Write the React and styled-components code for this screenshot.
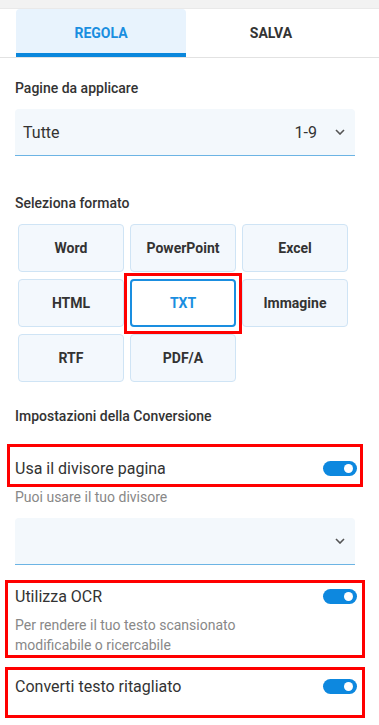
import React from 'react'
import styled, { createGlobalStyle } from 'styled-components'

const GlobalStyle = createGlobalStyle`
  body {
    margin: 0;
    background: #fff;
    font-family: Roboto, 'Noto Sans', sans-serif;
    color: #333;
  }
`

const Page = styled.div`
  width: 379px;
  height: 725px;
  overflow: hidden;
  background: #fff;
`

const TopStrip = styled.div`
  height: 9px;
  background: #f2f2f2;
  border-bottom: 1px solid #e9e9e9;
  box-sizing: border-box;
`

const Tabs = styled.div`
  display: flex;
  padding: 0 16px;
  border-bottom: 1px solid #e2e2e2;
`

const Tab = styled.div`
  width: 170px;
  height: 48px;
  box-sizing: border-box;
  display: flex;
  align-items: center;
  justify-content: center;
  font-size: 14px;
  font-weight: 700;
  padding-top: ${p => (p.active ? '4px' : '0')};
  color: ${p => (p.active ? '#1a8ee0' : '#333')};
  background: ${p => (p.active ? '#e8f3fd' : 'transparent')};
  border-bottom: ${p => (p.active ? '4px solid #0a87dc' : 'none')};
  border-radius: 4px 4px 0 0;
`

const Content = styled.div`
  padding: 0 24px 0 15px;
  display: flex;
  flex-direction: column;
`

const Label = styled.div`
  font-size: 14px;
  line-height: 20px;
  font-weight: 500;
  color: #333;
  margin-top: ${p => p.top}px;
`

const Select = styled.div`
  margin-top: ${p => p.top}px;
  height: 47px;
  box-sizing: border-box;
  background: #f3f8fc;
  border-radius: 4px 4px 0 0;
  border-bottom: 1px solid #6cb4e4;
  display: flex;
  align-items: center;
  padding: 0 10px 0 8px;
  font-size: 16px;
  color: #333;
`

const SelectValue = styled.span`
  flex: 1;
`

const SelectRange = styled.span`
  margin-right: 18px;
`

const Grid = styled.div`
  margin: 11px 0 0 3px;
  display: grid;
  grid-template-columns: repeat(3, 106px);
  grid-auto-rows: 48px;
  column-gap: 6px;
  row-gap: 7px;
`

const Format = styled.div`
  position: relative;
  box-sizing: border-box;
  display: flex;
  align-items: center;
  justify-content: center;
  font-size: 14px;
  font-weight: 700;
  border-radius: 4px;
  background: ${p => (p.active ? '#fff' : '#f3f8fd')};
  border: ${p => (p.active ? '2px solid #1a8ee0' : '1px solid #cfe4f5')};
  color: ${p => (p.active ? '#1a8ee0' : '#333')};

  &::before {
    content: '';
    display: ${p => (p.active ? 'block' : 'none')};
    position: absolute;
    inset: -8px -8px -9px -8px;
    border: 3px solid #f00;
  }
`

const OptionBox = styled.div`
  margin: ${p => p.top}px ${p => p.side}px 0;
  height: ${p => p.h}px;
  box-sizing: border-box;
  border: 3px solid #f00;
  padding: ${p => p.pad};
  display: flex;
  flex-direction: column;
`

const OptionRow = styled.div`
  display: flex;
  align-items: center;
  justify-content: space-between;
  height: 24px;
  font-size: 16px;
  color: #333;
`

const Hint = styled.div`
  font-size: 14px;
  line-height: 20px;
  color: #888;
  margin-top: ${p => p.top || 0}px;
`

const Toggle = styled.div`
  width: 34px;
  height: 15px;
  border-radius: 8px;
  background: #0d88df;
  position: relative;
  flex-shrink: 0;

  &::after {
    content: '';
    position: absolute;
    right: 4px;
    top: 3px;
    width: 9px;
    height: 9px;
    border-radius: 50%;
    background: #fff;
  }
`

const Chevron = () => (
  <svg width="10" height="6" viewBox="0 0 10 6">
    <path d="M1 1 L5 5 L9 1" fill="none" stroke="#555" strokeWidth="1.6" />
  </svg>
)

const formats = ['Word', 'PowerPoint', 'Excel', 'HTML', 'TXT', 'Immagine', 'RTF', 'PDF/A']

export default function App() {
  return (
    <Page>
      <GlobalStyle />
      <TopStrip />
      <Tabs>
        <Tab active>REGOLA</Tab>
        <Tab>SALVA</Tab>
      </Tabs>
      <Content>
        <Label top={20}>Pagine da applicare</Label>
        <Select top={11}>
          <SelectValue>Tutte</SelectValue>
          <SelectRange>1-9</SelectRange>
          <Chevron />
        </Select>

        <Label top={37}>Seleziona formato</Label>
        <Grid>
          {formats.map(f => (
            <Format key={f} active={f === 'TXT'}>{f}</Format>
          ))}
        </Grid>

        <Label top={24}>Impostazioni della Conversione</Label>
        <OptionBox top={18} side={-8} h={43} pad="9px 3px 0 5px">
          <OptionRow>
            Usa il divisore pagina
            <Toggle />
          </OptionRow>
        </OptionBox>
        <Hint>Puoi usare il tuo divisore</Hint>
        <Select top={11}>
          <SelectValue />
          <Chevron />
        </Select>

        <OptionBox top={15} side={-10} h={78} pad="1px 5px 0 7px">
          <OptionRow>
            Utilizza OCR
            <Toggle />
          </OptionRow>
          <Hint top={7}>
            Per rendere il tuo testo scansionato
            <br />
            modificabile o ricercabile
          </Hint>
        </OptionBox>

        <OptionBox top={9} side={-10} h={51} pad="4px 5px 0 7px">
          <OptionRow>
            Converti testo ritagliato
            <Toggle />
          </OptionRow>
        </OptionBox>
      </Content>
    </Page>
  )
}
